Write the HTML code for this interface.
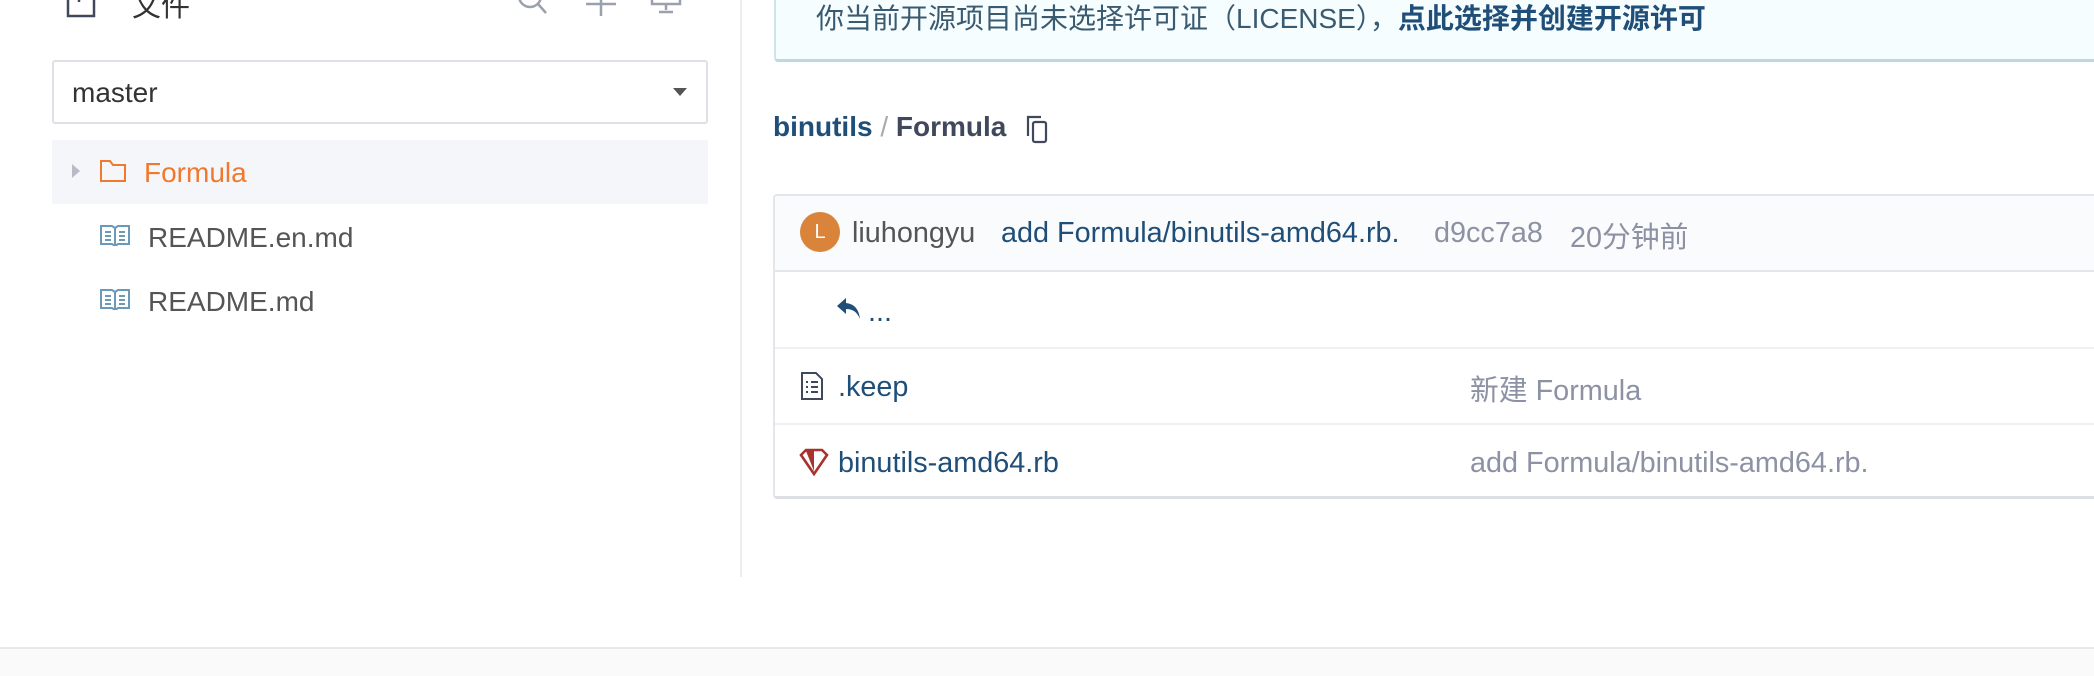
<!DOCTYPE html>
<html><head><meta charset="utf-8"><style>
*{margin:0;padding:0;box-sizing:border-box}
body{width:2094px;height:676px;background:#fff;position:relative;overflow:hidden;font-family:"Liberation Sans","Noto Sans CJK SC",sans-serif;font-size:28px;color:#40485b}
.a{position:absolute;white-space:nowrap}
.blue{color:#1f4e78}
.gray{color:#8c92a4}
.t{font-size:28.8px}
</style></head><body>
<svg class="a" style="left:66px;top:-14px" width="30" height="34" viewBox="0 0 30 34" fill="none" stroke="#40485b" stroke-width="2.5"><rect x="2" y="2" width="26" height="28"/><path d="M13 4v12M9 10l4-4"/></svg>
<div class="a" style="left:132px;top:-17px;font-size:29px;color:#333">文件</div>
<svg class="a" style="left:514px;top:-16px" width="36" height="34" viewBox="0 0 36 34" fill="none" stroke="#9aa0ad" stroke-width="2.5"><circle cx="16" cy="12" r="11"/><path d="M24 20l8 9"/></svg>
<svg class="a" style="left:586px;top:-14px" width="30" height="30" viewBox="0 0 30 30" fill="none" stroke="#9aa0ad" stroke-width="2.5"><path d="M15 0v30M0 18h30"/></svg>
<svg class="a" style="left:650px;top:-14px" width="32" height="30" viewBox="0 0 32 30" fill="none" stroke="#9aa0ad" stroke-width="2.5"><rect x="2" y="0" width="28" height="18"/><path d="M16 18v6M9 26h14"/></svg>
<div class="a" style="left:52px;top:60px;width:656px;height:64px;border:2px solid #dde1e6;border-radius:3px"></div>
<div class="a" style="left:72px;top:77px;color:#333">master</div>
<div class="a" style="left:673px;top:88px;width:0;height:0;border-left:7px solid transparent;border-right:7px solid transparent;border-top:8px solid #555"></div>
<div class="a" style="left:52px;top:140px;width:656px;height:64px;background:#f5f6fa"></div>
<div class="a" style="left:72px;top:164px;width:0;height:0;border-top:7px solid transparent;border-bottom:7px solid transparent;border-left:8px solid #b8bcc6"></div>
<svg class="a" style="left:100px;top:160px" width="26" height="22" viewBox="0 0 26 22" fill="none" stroke="#f0792f" stroke-width="2"><path d="M1 1h9l3 4h12v16H1z"/></svg>
<div class="a" style="left:144px;top:157px;color:#f0792f">Formula</div>
<svg class="a" style="left:100px;top:224px" width="30" height="22" viewBox="0 0 30 22" fill="none" stroke="#6b9ab8" stroke-width="2"><path d="M1 2h11l3 2 3-2h11v18H18l-3 2-3-2H1z M15 4v18 M5 8h6M5 12h6M5 16h6M19 8h6M19 12h6M19 16h6"/></svg>
<div class="a" style="left:148px;top:222px;color:#555">README.en.md</div>
<svg class="a" style="left:100px;top:288px" width="30" height="22" viewBox="0 0 30 22" fill="none" stroke="#6b9ab8" stroke-width="2"><path d="M1 2h11l3 2 3-2h11v18H18l-3 2-3-2H1z M15 4v18 M5 8h6M5 12h6M5 16h6M19 8h6M19 12h6M19 16h6"/></svg>
<div class="a" style="left:148px;top:286px;color:#555">README.md</div>
<div class="a" style="left:740px;top:0;width:2px;height:577px;background:#eceef1"></div>
<div class="a" style="left:774px;top:-20px;width:1340px;height:82px;background:#f6fdff;border:2px solid #cfe3ea;border-bottom:3px solid #bcd8e2;border-radius:4px"></div>
<div class="a" style="left:816px;top:-3px;color:#3a5a70;font-size:28px">你当前开源项目尚未选择许可证（LICENSE），<b style="color:#1f4e78">点此选择并创建开源许可</b></div>
<div class="a" style="left:773px;top:111px;font-size:28px;font-weight:bold"><span class="blue">binutils</span><span style="color:#aaa;font-weight:normal"> / </span><span style="color:#40485b">Formula</span></div>
<svg class="a" style="left:1024px;top:114px" width="28" height="32" viewBox="0 0 28 32" fill="none" stroke="#40485b" stroke-width="2.2"><path d="M4 22V3h13"/><rect x="9" y="8" width="13" height="20" rx="2"/></svg>
<div class="a" style="left:773px;top:194px;width:1340px;height:305px;border:2px solid #e3e6ea;border-bottom:3px solid #dcdfe4;border-radius:4px;overflow:hidden">
 <div style="height:76px;background:#fafbfc;border-bottom:2px solid #e3e6ea"></div>
 <div style="height:77px;border-bottom:2px solid #eef0f3"></div>
 <div style="height:76px;border-bottom:2px solid #eef0f3"></div>
</div>
<div class="a" style="left:800px;top:212px;width:40px;height:40px;border-radius:50%;background:#d9843a;color:#fff;font-size:20px;text-align:center;line-height:40px">L</div>
<div class="a t" style="left:852px;top:217px;color:#555">liuhongyu</div>
<div class="a blue t" style="left:1001px;top:217px">add Formula/binutils-amd64.rb.</div>
<div class="a gray t" style="left:1434px;top:217px">d9cc7a8</div>
<div class="a gray t" style="left:1570px;top:215px">20分钟前</div>
<svg class="a" style="left:836px;top:296px" width="28" height="26" viewBox="0 0 28 26" fill="#1f4e78"><path d="M10 2L1 10l9 8v-5c7 0 11 3 14 10-1-9-5-15-14-16z"/></svg>
<div class="a blue t" style="left:868px;top:296px">...</div>
<svg class="a" style="left:800px;top:372px" width="24" height="28" viewBox="0 0 24 28" fill="none" stroke="#40485b" stroke-width="2"><path d="M2 1h14l6 6v20H2z"/><path d="M6 10h2M11 10h7M6 15h2M11 15h7M6 20h2M11 20h7"/></svg>
<div class="a blue t" style="left:838px;top:371px">.keep</div>
<div class="a gray t" style="left:1470px;top:368px">新建 Formula</div>
<svg class="a" style="left:798px;top:448px" width="32" height="28" viewBox="0 0 32 28"><path d="M3 7l5-5h16l5 5-13 19z" fill="none" stroke="#a8322d" stroke-width="2.6"/><path d="M8 3h8l0 20z" fill="#a8322d"/></svg>
<div class="a blue t" style="left:838px;top:447px">binutils-amd64.rb</div>
<div class="a gray t" style="left:1470px;top:447px">add Formula/binutils-amd64.rb.</div>
<div class="a" style="left:0;top:647px;width:2094px;height:29px;background:#fafafa;border-top:2px solid #e8e8e8"></div>
</body></html>
